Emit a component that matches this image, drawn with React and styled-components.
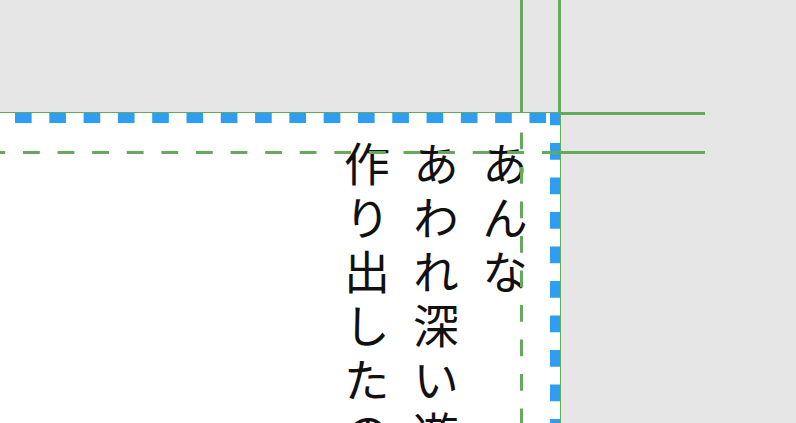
import React from 'react'
import styled, { createGlobalStyle } from 'styled-components'

const GREEN = '#64aa5a'
const BLUE = '#2f9df2'

const GlobalStyle = createGlobalStyle`
  html, body {
    margin:0;
    padding:0;
    background:#e6e6e6;
  }
  body {
    overflow:hidden;
    font-family:"Noto Sans CJK JP", sans-serif;
  }
`

const Stage = styled.div`
  position:relative;
  width:796px;
  height:423px;
  overflow:hidden;
  box-sizing:border-box;
  padding-top:113px;
`

// the box with the dashed blue border, cut off on the left and bottom
const Box = styled.div`
  position:relative;
  z-index:1;
  box-sizing:border-box;
  width:680px;
  height:420px;
  margin-left:-120px;
  writing-mode:vertical-rl;
  border:10px solid transparent;
  background-color:#fff;
  background-image:
    linear-gradient(90deg, ${BLUE} 17px, transparent 0),
    linear-gradient(180deg, ${BLUE} 17px, transparent 0);
  background-size:34.3px 10px, 10px 34.5px;
  background-repeat:repeat-x, repeat-y;
  background-position:135px 0, right 0 top 30px;
  background-origin:border-box;
  padding:18px 11px 0 0;
`

const Poem = styled.p`
  margin:0;
  font-family:"Noto Sans CJK JP", sans-serif;
  font-size:46px;
  letter-spacing:8px;
  line-height:69px;
  color:#111;
  white-space:nowrap;
`

const HGuide = styled.div`
  position:absolute;
  z-index:${p => (p.$dashed ? 2 : 0)};
  top:${p => p.$top}px;
  left:${p => p.$left}px;
  width:${p => p.$width}px;
  height:3px;
  background:${p =>
    p.$dashed
      ? `linear-gradient(90deg, ${GREEN} 17px, transparent 0) ${p.$phase}px 0 / 34.6px 3px repeat-x`
      : GREEN};
`

const VGuide = styled.div`
  position:absolute;
  z-index:${p => (p.$dashed ? 2 : 0)};
  top:${p => p.$top}px;
  left:${p => p.$left}px;
  width:3px;
  height:${p => p.$height}px;
  background:${p =>
    p.$dashed
      ? `linear-gradient(180deg, ${GREEN} 17px, transparent 0) 0 ${p.$phase}px / 3px 34.5px repeat-y`
      : GREEN};
`

const lines = ['あんな', 'あわれ深い遊び', '作り出したのは']

export default function App() {
  return (
    <>
      <GlobalStyle />
      <Stage>
        <HGuide $top={112} $left={0} $width={705} />
        <HGuide $top={151} $left={560} $width={145} />
        <HGuide $dashed $top={151} $left={0} $width={560} $phase={23} />
        <VGuide $left={520} $top={0} $height={113} />
        <VGuide $dashed $left={520} $top={123} $height={300} $phase={9.5} />
        <VGuide $left={558} $top={0} $height={423} />
        <Box>
          <Poem>
            {lines.map((l, i) => (
              <React.Fragment key={i}>
                {l}
                {i < lines.length - 1 && <br />}
              </React.Fragment>
            ))}
          </Poem>
        </Box>
      </Stage>
    </>
  )
}
